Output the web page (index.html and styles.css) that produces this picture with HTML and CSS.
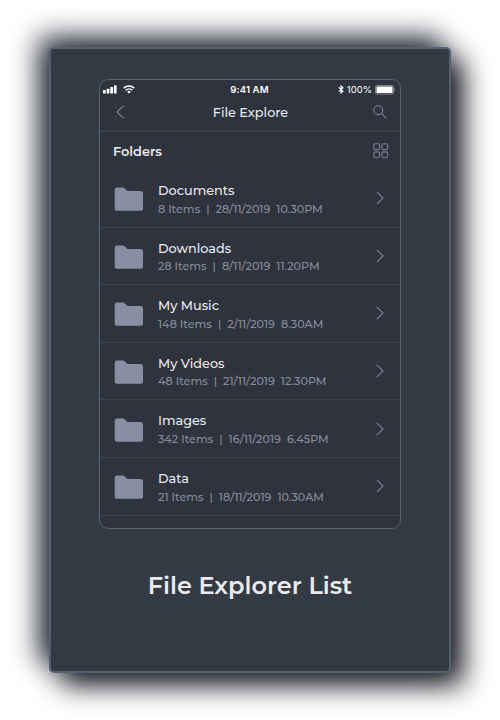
FILE: index.html
```html
<!DOCTYPE html>
<html lang="en">
<head>
<meta charset="utf-8">
<title>File Explorer List</title>
<link rel="stylesheet" href="styles.css">
</head>
<body>
<svg class="defs" width="0" height="0" aria-hidden="true">
  <symbol id="folder" viewBox="0 0 30 25"><path d="M3 .5h5.500c1 0 1.600.3 2.300 1l2.700 2.500H26.500c1.600 0 2.500 1 2.500 2.500v15c0 1.500-.9 2.200-2.500 2.200H3C1.400 23.700 .7 23 .7 21.500V3C.7 1.500 1.400.5 3 .5z" fill="#8790a2"/></symbol>
  <symbol id="chevron" viewBox="0 0 8 14"><path d="M.8.8 7 7 .8 13.200" fill="none" stroke="#7b8495" stroke-width="1.100"/></symbol>
</svg>
<main class="card">
  <section class="phone">
    <div class="status">
      <div class="signal">
        <svg width="14" height="9" viewBox="0 0 14 9" fill="#fff"><rect x="0" y="5" width="2.700" height="3.500" rx=".6"/><rect x="3.700" y="3.700" width="2.700" height="4.800" rx=".6"/><rect x="7.300" y="2" width="2.700" height="6.500" rx=".6"/><rect x="10.900" y=".3" width="2.700" height="8.200" rx=".6"/></svg>
        <svg width="12" height="9" viewBox="0 0 12 9" fill="none" stroke="#fff" stroke-width="1.500"><path d="M.7 3.200a7.600 7.600 0 0 1 10.600 0M2.700 5.300a4.700 4.700 0 0 1 6.600 0"/><path d="M4.200 6.700a2.600 2.600 0 0 1 3.600 0L6 8.500z" fill="#fff" stroke="none"/></svg>
      </div>
      <span class="time">9:41 AM</span>
      <div class="power">
        <svg width="6" height="9" viewBox="0 0 6 10" fill="none" stroke="#fff" stroke-width="1.200"><path d="M.5 2.700 5.200 7 3 9V1l2.200 2L.5 7.300"/></svg>
        <span class="percent">100%</span>
        <svg width="21" height="10" viewBox="0 0 21 10"><rect x=".5" y=".5" width="18" height="8.600" rx="1.600" fill="none" stroke="#85878c"/><rect x="1.500" y="1.500" width="16" height="6.600" rx=".6" fill="#fff"/><path d="M19.500 3.200c1.200.5 1.200 2.700 0 3.200z" fill="#85878c"/></svg>
      </div>
    </div>
    <header class="bar">
      <svg width="8" height="14" viewBox="0 0 8 14"><path d="M7.200.8 1 7l6.200 6.200" fill="none" stroke="#7b8495" stroke-width="1.100"/></svg>
      <h2 class="bar-title">File Explore</h2>
      <svg width="14" height="14" viewBox="0 0 14 14" fill="none" stroke="#7b8495" stroke-width="1.100"><circle cx="5.200" cy="5.200" r="4.400"/><path d="m8.400 8.400 5 5"/></svg>
    </header>
    <div class="heading">
      <h3 class="heading-title">Folders</h3>
      <svg width="16" height="16" viewBox="0 0 16 16" fill="none" stroke="#7b8495" stroke-width="1.100"><rect x=".8" y=".8" width="5.800" height="5.800" rx="1.600"/><rect x="8.900" y=".8" width="5.800" height="5.800" rx="1.600"/><rect x=".8" y="8.900" width="5.800" height="5.800" rx="1.600"/><rect x="8.900" y="8.900" width="5.800" height="5.800" rx="1.600"/></svg>
    </div>
    <ul class="list">
      <li class="row"><svg class="folder"><use href="#folder"/></svg><div class="info"><span class="name">Documents</span><span class="meta">8 Items&nbsp; |&nbsp; 28/11/2019&nbsp; 10.30PM</span></div><svg class="chevron"><use href="#chevron"/></svg></li>
      <li class="row"><svg class="folder"><use href="#folder"/></svg><div class="info"><span class="name">Downloads</span><span class="meta">28 Items&nbsp; |&nbsp; 8/11/2019&nbsp; 11.20PM</span></div><svg class="chevron"><use href="#chevron"/></svg></li>
      <li class="row"><svg class="folder"><use href="#folder"/></svg><div class="info"><span class="name">My Music</span><span class="meta">148 Items&nbsp; |&nbsp; 2/11/2019&nbsp; 8.30AM</span></div><svg class="chevron"><use href="#chevron"/></svg></li>
      <li class="row"><svg class="folder"><use href="#folder"/></svg><div class="info"><span class="name">My Videos</span><span class="meta">48 Items&nbsp; |&nbsp; 21/11/2019&nbsp; 12.30PM</span></div><svg class="chevron"><use href="#chevron"/></svg></li>
      <li class="row"><svg class="folder"><use href="#folder"/></svg><div class="info"><span class="name">Images</span><span class="meta">342 Items&nbsp; |&nbsp; 16/11/2019&nbsp; 6.45PM</span></div><svg class="chevron"><use href="#chevron"/></svg></li>
      <li class="row"><svg class="folder"><use href="#folder"/></svg><div class="info"><span class="name">Data</span><span class="meta">21 Items&nbsp; |&nbsp; 18/11/2019&nbsp; 10.30AM</span></div><svg class="chevron"><use href="#chevron"/></svg></li>
    </ul>
  </section>
  <h1 class="caption">File Explorer List</h1>
</main>
</body>
</html>
```
FILE: styles.css
```css
* { box-sizing: border-box; margin: 0; padding: 0; }
body {
  width: 500px;
  height: 720px;
  padding: 47px 49px;
  overflow: hidden;
  background: #fff;
  font-family: Montserrat, Inter, "Open Sans", sans-serif;
  color: #e8eaed;
}
svg { display: block; flex: none; }
.defs { position: absolute; }
.card {
  width: 402px;
  height: 626px;
  padding: 30px 48px;
  border: 2px solid #566071;
  border-radius: 5px;
  background: #333a44;
  box-shadow: -10px -10px 28px #252b38, 12px 12px 28px #15181e;
}
.phone {
  width: 302px;
  height: 450px;
  border: 1px solid #566171;
  border-radius: 9px;
  background: #2f333d;
  overflow: hidden;
}
.status {
  display: grid;
  grid-template-columns: 1fr auto 1fr;
  align-items: center;
  height: 14px;
  margin-top: 3px;
  padding: 0 4px 0 3px;
  color: #fff;
  font-family: Inter, sans-serif;
}
.signal { display: flex; gap: 6px; margin-top: -1px; }
.time { font-size: 9.600px; line-height: 14px; font-weight: 600; letter-spacing: .1px; }
.power { display: flex; justify-content: flex-end; align-items: center; gap: 3px; margin-top: -1px; }
.percent { font-size: 9.500px; line-height: 14px; font-weight: 400; }
.bar {
  display: flex;
  justify-content: space-between;
  align-items: center;
  height: 35px;
  padding: 0 13px 3px 16px;
  border-bottom: 2px solid #393f4b;
}
.bar-title { padding-top: 1px; font-size: 12.800px; font-weight: 500; margin-left: 4px; }
.heading {
  display: flex;
  justify-content: space-between;
  align-items: center;
  height: 38px;
  padding: 0 11px 0 13px;
}
.heading-title { font-size: 12.900px; font-weight: 600; }
.list { list-style: none; }
.row {
  display: flex;
  align-items: center;
  height: 57.600px;
  padding: 0 16px 0 14px;
  border-bottom: 1.500px solid #3c424e;
}
.folder { width: 30px; height: 25px; margin-top: 3px; }
.info { flex: 1; display: flex; flex-direction: column; gap: 1.500px; margin: 2px 0 0 14px; white-space: nowrap; }
.name { font-size: 12.800px; line-height: 17px; font-weight: 500; }
.meta { font-size: 11.150px; line-height: 16px; font-weight: 500; color: #858d9d; }
.chevron { width: 8px; height: 14px; }
.caption { margin-top: 41px; text-align: center; font-size: 24px; line-height: 32px; font-weight: 600; white-space: nowrap; }
```
